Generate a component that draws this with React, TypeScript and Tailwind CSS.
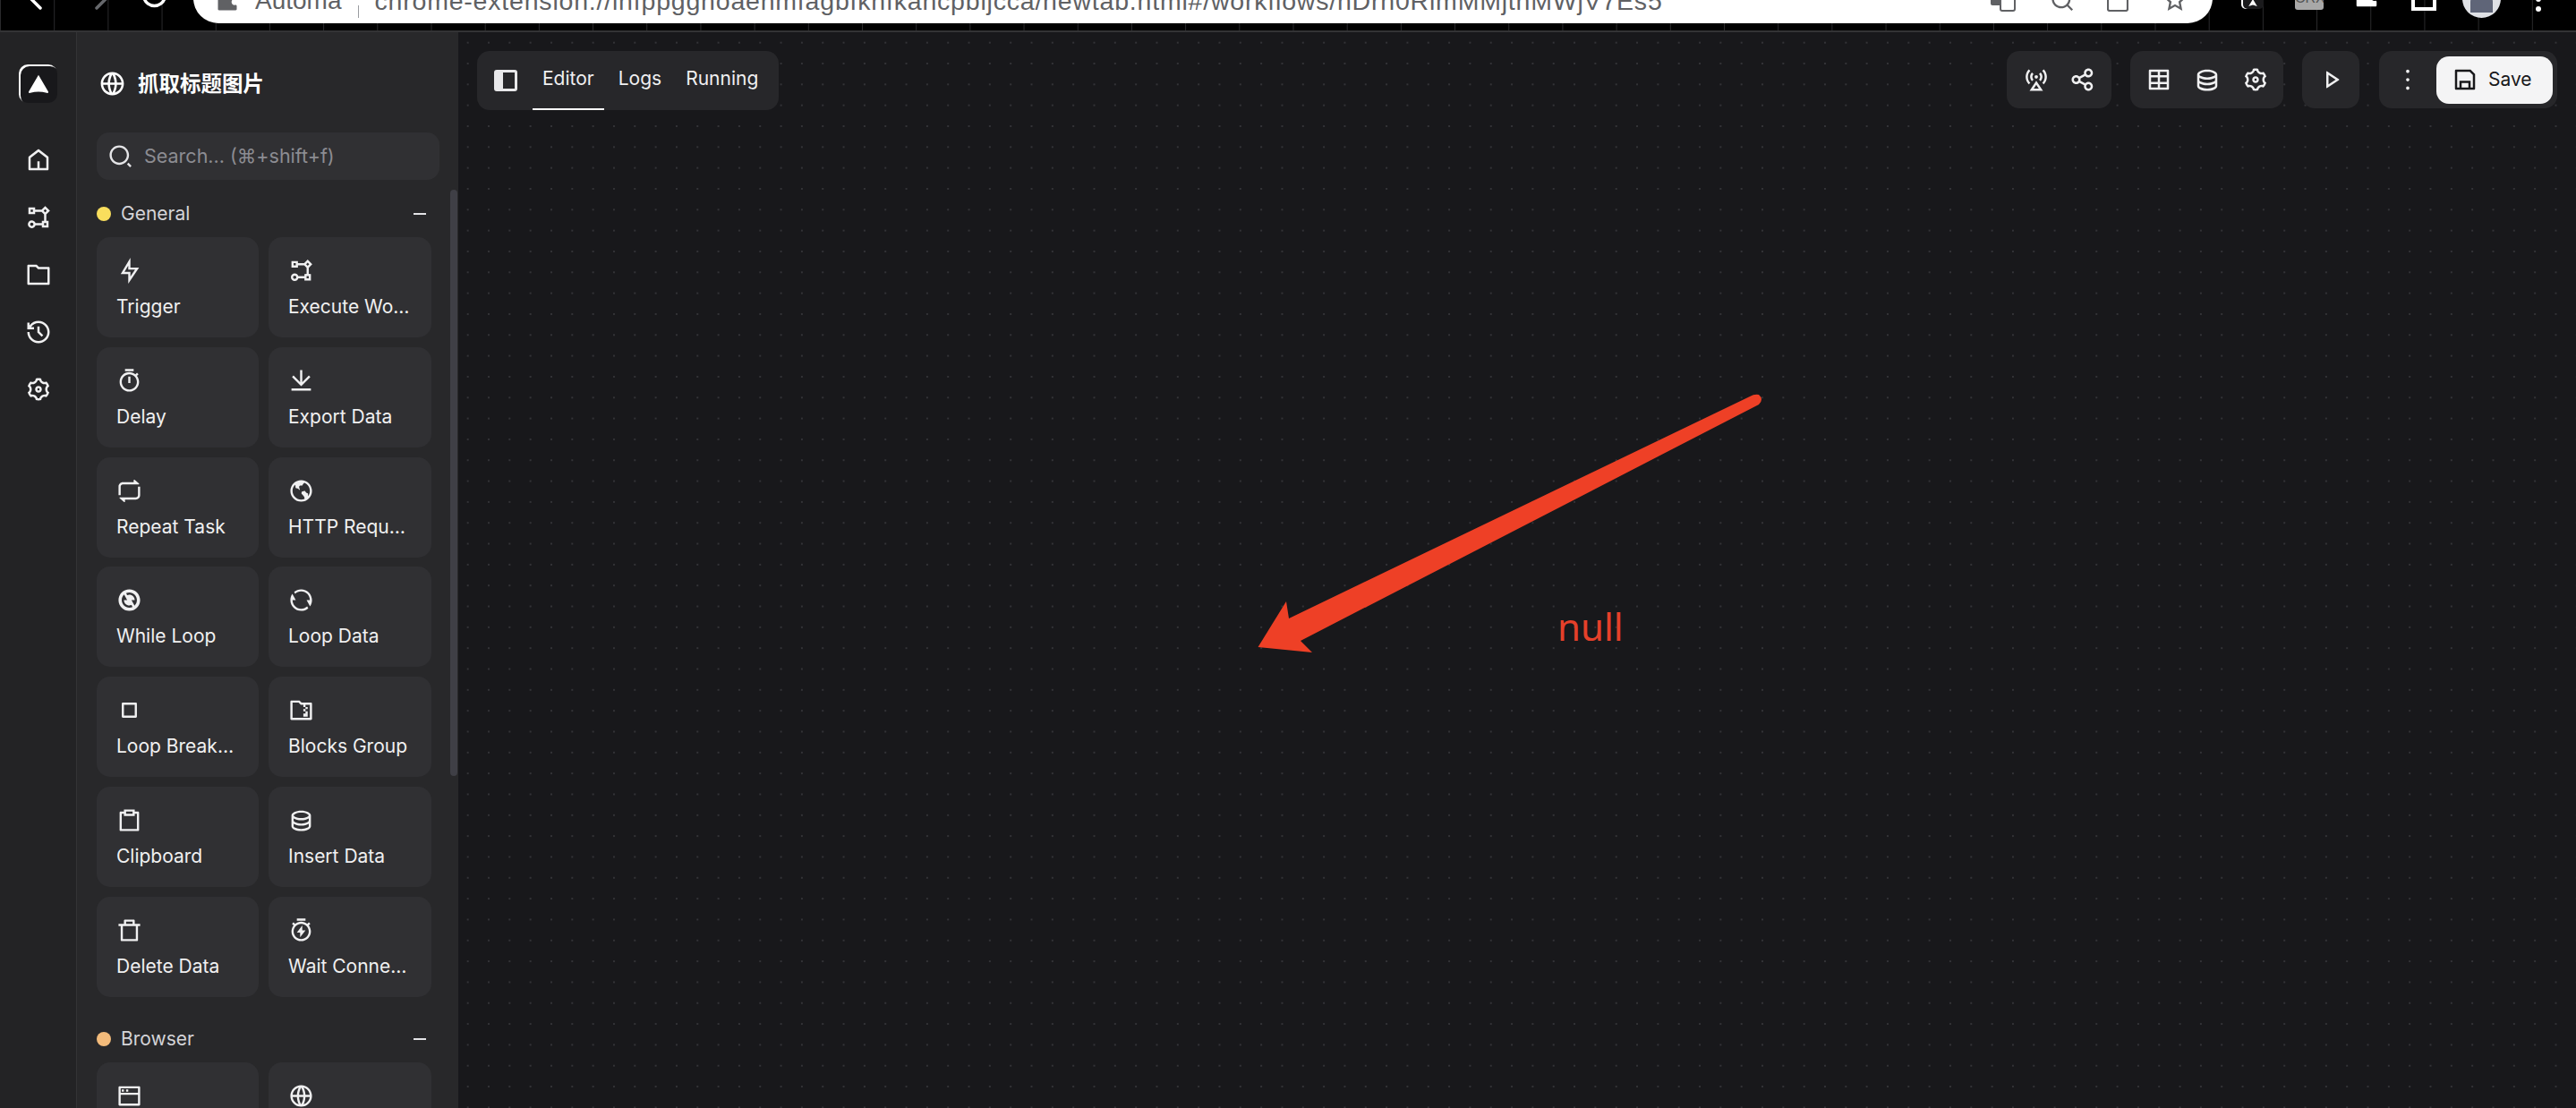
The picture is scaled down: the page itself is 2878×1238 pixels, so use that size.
import {
  RiBaseStationLine,
  RiClipboardLine,
  RiDatabase2Line,
  RiDeleteBin7Line,
  RiDownloadLine,
  RiEarthLine,
  RiFlashlightLine,
  RiFlowChart,
  RiFolderLine,
  RiFolderZipLine,
  RiGlobalLine,
  RiHistoryLine,
  RiHome5Line,
  RiMore2Line,
  RiPlayLine,
  RiPuzzle2Fill,
  RiRefreshFill,
  RiRefreshLine,
  RiRepeat2Line,
  RiSaveLine,
  RiSearch2Line,
  RiSearchLine,
  RiSettings3Line,
  RiShareLine,
  RiStarLine,
  RiStopLine,
  RiSubtractLine,
  RiTable2,
  RiTimerFlashLine,
  RiTimerLine,
  RiWindowLine,
} from "react-icons/ri";

const generalBlocks = [
  { name: "Trigger", Icon: RiFlashlightLine },
  { name: "Execute Workflow", Icon: RiFlowChart },
  { name: "Delay", Icon: RiTimerLine },
  { name: "Export Data", Icon: RiDownloadLine },
  { name: "Repeat Task", Icon: RiRepeat2Line },
  { name: "HTTP Request", Icon: RiEarthLine },
  { name: "While Loop", Icon: RiRefreshFill },
  { name: "Loop Data", Icon: RiRefreshLine },
  { name: "Loop Breakpoint", Icon: RiStopLine },
  { name: "Blocks Group", Icon: RiFolderZipLine },
  { name: "Clipboard", Icon: RiClipboardLine },
  { name: "Insert Data", Icon: RiDatabase2Line },
  { name: "Delete Data", Icon: RiDeleteBin7Line },
  { name: "Wait Connections", Icon: RiTimerFlashLine },
];

const browserBlocks = [
  { name: "Active Tab", Icon: RiWindowLine },
  { name: "New Tab", Icon: RiGlobalLine },
];

const railIcons = [RiHome5Line, RiFlowChart, RiFolderLine, RiHistoryLine, RiSettings3Line];

function BlockCard({ name, Icon }: { name: string; Icon: typeof RiFlowChart }) {
  return (
    <div className="h-[112px] min-w-0 rounded-[15px] bg-[#303033] pl-[22px] pr-[24px] pt-[23px] text-[#f0f0f1]">
      <Icon className="size-[29px]" />
      <p className="mt-[11px] truncate text-[21px] leading-[30px]">{name}</p>
    </div>
  );
}

function BlockGroup({
  title,
  dot,
  blocks,
}: {
  title: string;
  dot: string;
  blocks: typeof generalBlocks;
}) {
  return (
    <section className="w-[374px]">
      <div className="flex h-[30px] items-center">
        <span className={`size-4 rounded-full ${dot}`} />
        <span className="ml-[11px] flex-1 text-[21px] text-[#d4d4d8]">{title}</span>
        <RiSubtractLine className="mr-[1px] size-[24px] text-[#e4e4e7]" />
      </div>
      <div className="mt-[11px] grid grid-cols-[181px_182px] gap-x-[11px] gap-y-[10.8px]">
        {blocks.map((block) => (
          <BlockCard key={block.name} name={block.name} Icon={block.Icon} />
        ))}
      </div>
    </section>
  );
}

// The window top is cut off in the shot, so only the lower ends of these show
function NavIcons() {
  return (
    <svg viewBox="0 0 216 34" className="h-[34px] w-[216px] shrink-0" fill="none" strokeWidth="3.5" strokeLinecap="round">
      <path d="M24 -12 L45 9" stroke="#fff" />
      <path d="M118 -1 L108 9" stroke="#66686c" />
      <path d="M161 -2 A12 12 0 0 0 184 -2" stroke="#fff" />
    </svg>
  );
}

function BrowserBar() {
  return (
    <div className="flex h-[36px] shrink-0 items-start overflow-hidden border-b-2 border-[#333335] bg-black bg-[linear-gradient(90deg,#2a2a2c_1px,#000_1px)] bg-[size:60.2px_100%] font-['Liberation_Sans',sans-serif]">
      <NavIcons />
      <div className="-mt-[30px] flex h-[56px] w-[2256px] shrink-0 items-center rounded-[28px] bg-white pl-[24px] pr-[28px] text-[#606164]">
        <RiPuzzle2Fill className="mt-[6px] size-[28px]" />
        <span className="ml-[17px] mt-[6px] text-[28px] leading-none">Automa</span>
        <span className="mx-[18px] mt-[30px] h-[14px] w-px bg-[#9a9ca0]" />
        <span className="mt-[6px] flex-1 text-[28.5px] leading-none tracking-[0.8px]">
          chrome-extension://infppggnoaenmfagbfknfkancpbljcca/newtab.html#/workflows/hDrn0RimMMjtnMWjV7Es5
        </span>
        {/* Translate page */}
        <svg viewBox="0 0 28 26" className="mt-[4px] h-[26px] w-[28px]">
          <rect x="0" y="2" width="17" height="17" rx="2" fill="#606164" />
          <rect x="11" y="6" width="16" height="19" rx="2" fill="#fff" stroke="#606164" strokeWidth="2" />
        </svg>
        <RiSearchLine className="ml-[38px] mt-[4px] size-[28px]" />
        <svg viewBox="0 0 24 30" className="ml-[36px] h-[30px] w-[24px]" fill="none" stroke="#606164" strokeWidth="2.2">
          <path d="M6 10H3a2 2 0 0 0-2 2v15a2 2 0 0 0 2 2h18a2 2 0 0 0 2-2V12a2 2 0 0 0-2-2h-3M12 2v15" />
        </svg>
        <RiStarLine className="ml-[38px] mt-[4px] size-[28px]" />
      </div>
      {/* Extension icons and profile */}
      <div className="ml-[32px] -mt-[14px] flex h-[24px] w-[25px] shrink-0 items-end justify-center rounded-[5px] bg-[#1a1a1c] pb-[3px] shadow-[inset_2px_0_0_#fff]">
        <svg viewBox="0 0 12 10" className="h-[8px] w-[12px] fill-white">
          <path d="M6 0 12 10 6 8 0 10z" />
        </svg>
      </div>
      <div className="ml-[35px] -mt-[12px] h-[23px] w-[32px] shrink-0 overflow-hidden rounded-[3px] bg-[#a8a8a8] text-center text-[16px] leading-[20px] text-[#555]">
        CRX
      </div>
      <RiPuzzle2Fill className="ml-[33px] -mt-[19px] size-[30px] shrink-0 text-white" />
      <div className="ml-[35px] -mt-[8px] h-[20px] w-[28px] shrink-0 border-x-[4px] border-b-[4px] border-white" />
      <div className="relative ml-[29px] -mt-[23px] h-[43px] w-[43px] shrink-0 overflow-hidden rounded-full bg-[#dfe1e5]">
        <div className="absolute bottom-[6px] left-[9px] h-[24px] w-[25px] rounded-t-full bg-[#5f6578]" />
      </div>
      <div className="ml-[39px] -mt-[4px] flex shrink-0 flex-col gap-[5px]">
        <span className="size-[6px] rounded-full bg-white" />
        <span className="size-[6px] rounded-full bg-white" />
      </div>
    </div>
  );
}

export default function App() {
  return (
    <div className="flex h-[1238px] w-[2878px] flex-col overflow-hidden bg-[#18181b] font-['Inter',sans-serif]">
      <BrowserBar />
      <div className="flex min-h-0 flex-1">
        {/* Main rail */}
        <aside className="flex w-[86px] shrink-0 flex-col items-center border-r border-[#333336] bg-[#232325] pt-[36px]">
          <div className="flex size-[43px] items-center justify-center rounded-[10px] bg-[#18181b] shadow-[inset_2px_2px_0_#fff]">
            <svg viewBox="0 0 24 24" className="size-[26px] fill-white">
              <path d="M12 2.5 22 19.5c.6 1.2-.5 2-1.6 1.6-5.6-1.7-11.2-1.7-16.8 0-1.1.4-2.2-.4-1.6-1.6z" />
            </svg>
          </div>
          <nav className="mt-[49px] flex flex-col gap-[34px] text-[#f0f0f1]">
            {railIcons.map((Icon, i) => (
              <Icon key={i} className="size-[30px]" />
            ))}
          </nav>
        </aside>

        {/* Blocks panel */}
        <aside className="relative w-[426px] shrink-0 overflow-hidden bg-[#28282a] pl-[22px]">
          <div className="mt-[41px] flex h-[32px] items-center text-white">
            <RiGlobalLine className="ml-[2px] size-[31px]" />
            <h1 className="ml-[13px] font-['Noto_Sans_CJK_SC',sans-serif] text-[23.5px] font-bold">抓取标题图片</h1>
          </div>
          <div className="mt-[39px] flex h-[53px] w-[383px] items-center rounded-[14px] bg-[#303033] pl-[12px] text-[#8c8c92]">
            <RiSearch2Line className="size-[29px] text-[#e4e4e7]" />
            <span className="ml-[12px] text-[21.5px]">Search... (⌘+shift+f)</span>
          </div>
          <div className="mt-[23px]">
            <BlockGroup title="General" dot="bg-[#f9de5d]" blocks={generalBlocks} />
          </div>
          <div className="mt-[32px]">
            <BlockGroup title="Browser" dot="bg-[#f3bb7b]" blocks={browserBlocks} />
          </div>
          {/* Scrollbar */}
          <div className="absolute right-[1px] top-[176px] h-[655px] w-[8px] rounded-full bg-[#3f3f46]" />
        </aside>

        {/* Editor canvas */}
        <main className="relative min-w-0 flex-1 bg-[radial-gradient(#333337_1.1px,transparent_1.1px)] bg-[size:23.33px_23.33px] bg-[position:-1px_0px] px-[21px] pt-[21px]">
          <div className="flex items-start justify-between">
            <div className="flex h-[66px] w-[337px] items-center rounded-[14px] bg-[#27272a] pl-[19px]">
              <svg viewBox="0 0 26 24" className="h-[24px] w-[26px]">
                <rect x="1.5" y="1.5" width="23" height="21" rx="1.5" fill="none" stroke="#e8e8ea" strokeWidth="3" />
                <rect x="1" y="1" width="9" height="22" fill="#e8e8ea" />
              </svg>
              <div className="ml-[17px] flex h-full text-[21px] text-[#f0f0f1]">
                <div className="flex h-full items-center border-b-2 border-white px-[11px] pb-[2px]">Editor</div>
                <div className="flex h-full items-center pb-[4px] pl-[16px]">Logs</div>
                <div className="flex h-full items-center pb-[4px] pl-[27px]">Running</div>
              </div>
            </div>

            <div className="flex items-center text-[#f0f0f1]">
              <div className="flex h-[64px] w-[117px] items-center justify-center gap-[22px] rounded-[14px] bg-[#27272a]">
                <RiBaseStationLine className="size-[30px]" />
                <RiShareLine className="size-[30px]" />
              </div>
              <div className="ml-[21px] flex h-[64px] w-[171px] items-center justify-center gap-[24px] rounded-[14px] bg-[#27272a]">
                <RiTable2 className="size-[30px]" />
                <RiDatabase2Line className="size-[30px]" />
                <RiSettings3Line className="size-[30px]" />
              </div>
              <div className="ml-[21px] flex h-[64px] w-[64px] items-center justify-center rounded-[14px] bg-[#27272a]">
                <RiPlayLine className="size-[30px]" />
              </div>
              <div className="ml-[22px] flex h-[64px] w-[199px] items-center rounded-[14px] bg-[#27272a] pl-[17px] pr-[5px]">
                <RiMore2Line className="size-[30px]" />
                <button className="ml-[17px] flex h-[53px] w-[130px] items-center rounded-[14px] bg-[#f4f4f5] pl-[17px] text-[21px] text-[#18181b]">
                  <RiSaveLine className="size-[30px]" />
                  <span className="ml-[11px]">Save</span>
                </button>
              </div>
            </div>
          </div>

          {/* Annotation drawn over the canvas */}
          <svg className="absolute left-[880px] top-[400px] h-[300px] w-[580px]" viewBox="880 400 580 300">
            <path
              d="M1955 407 L1440 655 L1437 636 L1405.5 687 L1466 693 L1453 680 L1965 416 Q1971 410 1965 405 Q1960 404 1955 407 Z"
              transform="translate(-512 0)"
              fill="#ee4026"
            />
          </svg>
          <span className="absolute left-[1228px] top-[643px] font-['Noto_Sans',sans-serif] text-[42px] font-normal leading-none text-[#e5402a]">
            null
          </span>
        </main>
      </div>
    </div>
  );
}
